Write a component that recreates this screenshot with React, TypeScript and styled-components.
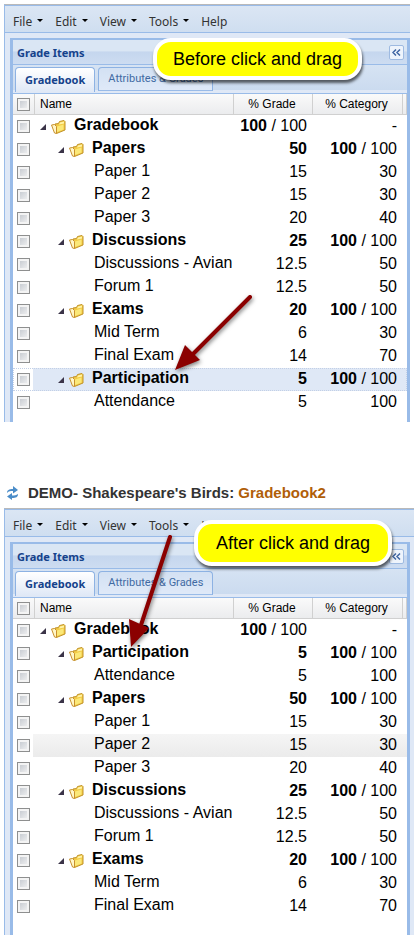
import React from "react";
import styled, { createGlobalStyle, css } from "styled-components";

const Global = createGlobalStyle`
  * { box-sizing: border-box; }
  body { margin: 0; background: #fff; color: #000; font-family: "Liberation Sans", Arial, sans-serif; }
`;

const uiFont = `"Noto Sans", Tahoma, sans-serif`;

const Page = styled.main`
  display: flex;
  flex-direction: column;
  padding: 4px 0 2px 4px;
`;

const Shot = styled.section<{ $inset?: boolean }>`
  position: relative;
  margin-right: ${(p) => (p.$inset ? "4px" : "0")};
  padding: 0 ${(p) => (p.$inset ? "0" : "4px")} 0 5px;
  background: #dfe8f6;
  border-top: 1px solid #b9b9b9;
  border-left: 1px solid #99bbe8;
`;

const MenuBar = styled.nav<{ $inset?: boolean }>`
  display: flex;
  align-items: center;
  gap: 12px;
  height: 28px;
  margin: 0 ${(p) => (p.$inset ? "0" : "-4px")} 5px -5px;
  padding: 6px 8px 0;
  background: linear-gradient(#dbe6f4, #cfdef0);
  border-top: 1px solid #99bbe8;
  border-bottom: 1px solid #99bbe8;
`;

const MenuButton = styled.button<{ $arrow: boolean }>`
  display: flex;
  align-items: center;
  gap: 5px;
  padding: 0;
  border: 0;
  background: none;
  color: #333;
  font: 12px/16px ${uiFont};
  ${(p) =>
    p.$arrow &&
    css`
      &::after {
        content: "";
        margin-top: -4px;
        border: 3px solid transparent;
        border-top-color: #000;
        border-bottom: 0;
      }
    `}
`;

const Panel = styled.div`
  border: solid #99bbe8;
  border-width: 2px 3px 0;
`;

const PanelHeader = styled.header`
  display: flex;
  align-items: center;
  justify-content: space-between;
  height: 25px;
  padding: 0 3px 0 4px;
  background: linear-gradient(#dae6f4 0 45%, #c5d6ee 50%, #cddcf1);
  border-bottom: 1px solid #99bbe8;
`;

const PanelTitle = styled.h2`
  margin: 0;
  padding-top: 2px;
  color: #15428b;
  font: bold 11px/16px ${uiFont};
`;

const CollapseButton = styled.button`
  display: grid;
  place-items: center;
  width: 15px;
  height: 15px;
  padding: 0;
  background: #eef4fc;
  border: 1px solid #9ebae1;
  border-radius: 2px;
`;

const TabBar = styled.div`
  display: flex;
  gap: 3px;
  height: 29px;
  padding: 2px 2px 0;
  background: linear-gradient(#d6e3f3, #cbdbef) top / 100% 25px no-repeat #dfe8f6;
  border-bottom: 1px solid #99bbe8;
`;

const TabFace = styled.button`
  padding: 0 9px;
  border: 1px solid #8db2e3;
  border-bottom: 0;
  border-radius: 4px 4px 0 0;
  white-space: nowrap;
`;

const ActiveTab = styled(TabFace)`
  height: 25px;
  background: linear-gradient(#fff, #dfe8f6);
  color: #15428b;
  font: bold 11px/20px ${uiFont};
`;

const IdleTab = styled(TabFace)`
  height: 24px;
  border-bottom: 1px solid #99bbe8;
  background: linear-gradient(#d3e1f3, #dfe9f8);
  color: #416aa3;
  font: 11px/20px Roboto, Tahoma, sans-serif;
`;

const Grid = styled.table`
  width: 100%;
  table-layout: fixed;
  border-collapse: separate;
  border-spacing: 0;
  background: #fff;
`;

const Col = styled.col<{ $width?: number }>`
  width: ${(p) => (p.$width ? `${p.$width}px` : "auto")};
`;

const HeadCell = styled.th<{ $align?: string }>`
  height: 21px;
  padding: 0 7px 0 5px;
  border-right: 1px solid #d0d0d0;
  border-bottom: 1px solid #d0d0d0;
  background: linear-gradient(#fafafa, #ebecee);
  font: 12px/16px "Liberation Sans", Arial, sans-serif;
  text-align: ${(p) => p.$align ?? "left"};
  white-space: nowrap;
`;

const HeadSpacer = styled(HeadCell)`
  padding: 0;
`;

const Cell = styled.td`
  height: 23px;
  padding: 0;
  overflow: hidden;
  font-size: 16px;
  line-height: 20px;
  white-space: nowrap;
`;

const CheckCell = styled(Cell)``;

const NameCell = styled(Cell)`
  padding-bottom: 3px;
`;

const NumberCell = styled(Cell)<{ $strong: boolean }>`
  padding: 0 6px 1px 0;
  text-align: right;
  font-weight: ${(p) => (p.$strong ? "bold" : "normal")};
`;

const Row = styled.tr<{ $tone?: "selected" | "hover" }>`
  height: 23px;
  ${(p) =>
    p.$tone &&
    css`
      background: ${p.$tone === "selected" ? "#dfe8f6" : "linear-gradient(#f5f5f5, #ebebeb)"};
      ${CheckCell} {
        background: linear-gradient(#fff, #fff) left / 20px 100% no-repeat;
      }
    `}
  ${(p) =>
    p.$tone === "selected" &&
    css`
      outline: 1px dotted #c3d0e6;
      outline-offset: -1px;
    `}
`;

const Light = styled.span`
  font-weight: normal;
`;

const Check = styled.input`
  display: block;
  appearance: none;
  width: 13px;
  height: 13px;
  margin: 0 0 0 4px;
  border: 1px solid #8e8f8f;
  background: linear-gradient(135deg, #bfc4cb, #f6f6f6);
  box-shadow: inset 0 0 0 2px #f4f4f4;
`;

const Node = styled.div<{ $depth: number; $leaf: boolean }>`
  display: flex;
  align-items: center;
  height: 20px;
  padding-left: ${(p) => (p.$leaf ? 59 : 5 + p.$depth * 18)}px;
  font-weight: ${(p) => (p.$leaf ? "normal" : "bold")};
`;

const Expander = styled.button`
  display: flex;
  align-items: center;
  gap: 5px;
  margin-right: 8px;
  padding: 3px 0 0;
  border: 0;
  background: none;
`;

const Callout = styled.p<{ $top: number; $left: number; $roomy?: boolean }>`
  position: absolute;
  top: ${(p) => p.$top}px;
  left: ${(p) => p.$left}px;
  margin: 0;
  padding: ${(p) => (p.$roomy ? "9px 18px" : "7px 16px")};
  border: 4px solid #fff;
  border-radius: 18px;
  background: #ff0;
  box-shadow: 1px 3px 3px rgba(0, 0, 0, 0.6);
  font-size: 18px;
  line-height: 20px;
  white-space: nowrap;
`;

const ArrowLayer = styled.svg<{ $top: number; $left: number }>`
  position: absolute;
  top: ${(p) => p.$top}px;
  left: ${(p) => p.$left}px;
  overflow: visible;
  pointer-events: none;
  filter: drop-shadow(1px 2px 2px rgba(0, 0, 0, 0.5));
`;

const SiteTitle = styled.h1`
  display: flex;
  align-items: center;
  gap: 8px;
  height: 30px;
  margin: 56px 0 0 2px;
  color: #333;
  font-size: 15px;
  line-height: 20px;
  white-space: nowrap;
`;

const SiteLink = styled.a`
  color: #b05e08;
  text-decoration: none;
`;

const GridEnd = styled.div<{ $height: number }>`
  height: ${(p) => p.$height}px;
  background: #fff;
`;

type Item = { name: string; grade: string; category: string; depth?: number };

const gradebook: Item[] = [{ name: "Gradebook", grade: "100 / 100", category: "-", depth: 0 }];
const papers: Item[] = [
  { name: "Papers", grade: "50", category: "100 / 100", depth: 1 },
  { name: "Paper 1", grade: "15", category: "30" },
  { name: "Paper 2", grade: "15", category: "30" },
  { name: "Paper 3", grade: "20", category: "40" },
];
const discussions: Item[] = [
  { name: "Discussions", grade: "25", category: "100 / 100", depth: 1 },
  { name: "Discussions - Avian", grade: "12.5", category: "50" },
  { name: "Forum 1", grade: "12.5", category: "50" },
];
const exams: Item[] = [
  { name: "Exams", grade: "20", category: "100 / 100", depth: 1 },
  { name: "Mid Term", grade: "6", category: "30" },
  { name: "Final Exam", grade: "14", category: "70" },
];
const participation: Item[] = [
  { name: "Participation", grade: "5", category: "100 / 100", depth: 1 },
  { name: "Attendance", grade: "5", category: "100" },
];

const FolderIcon = () => (
  <svg width="15" height="14" viewBox="0 0 15 14" aria-hidden="true">
    <path d="M4 4 7.500 3.500 8.500 1.500 13 .5 14 1.500V10L5.500 13.500z" fill="#f3cb45" stroke="#c0922a" />
    <path d="M.5 5 3.500 4.500 5.500 6.500V13.500L3.500 13z" fill="#fff6c8" stroke="#c8902c" />
    <path d="M6 6.500 12.500 4.500V9.500L6 12z" fill="#fbe878" />
    <path d="M9 2.500 13 1.500V3.500L8 4.500z" fill="#fff3a8" />
  </svg>
);

const Score = ({ value }: { value: string }) => {
  if (value === "-") return <Light>-</Light>;
  const [own, total] = value.split(" / ");
  return (
    <>
      {own}
      {total && <Light> / {total}</Light>}
    </>
  );
};

type GradeItemsProps = { rows: Item[]; marked: string; tone: "selected" | "hover"; inset?: boolean; end: number };

const GradeItems = ({ rows, marked, tone, inset, end }: GradeItemsProps) => (
  <>
    <MenuBar $inset={inset}>
      {["File", "Edit", "View", "Tools", "Help"].map((label) => (
        <MenuButton key={label} $arrow={label !== "Help"}>
          {label}
        </MenuButton>
      ))}
    </MenuBar>
    <Panel>
      <PanelHeader>
        <PanelTitle>Grade Items</PanelTitle>
        <CollapseButton aria-label="Collapse panel">
          <svg width="9" height="7" viewBox="0 0 9 7" fill="none" stroke="#3f66a3" strokeWidth="1.5">
            <path d="M4 .5 1 3.500l3 3M8 .5 5 3.500l3 3" />
          </svg>
        </CollapseButton>
      </PanelHeader>
      <TabBar role="tablist">
        <ActiveTab role="tab" aria-selected="true">
          Gradebook
        </ActiveTab>
        <IdleTab role="tab" aria-selected="false">
          Attributes &amp; Grades
        </IdleTab>
      </TabBar>
      <Grid>
        <colgroup>
          <Col $width={22} />
          <Col />
          <Col $width={79} />
          <Col $width={90} />
          <Col $width={4} />
        </colgroup>
        <thead>
          <tr>
            <HeadSpacer>
              <Check type="checkbox" aria-label="Select all" />
            </HeadSpacer>
            <HeadCell>Name</HeadCell>
            <HeadCell $align="center">% Grade</HeadCell>
            <HeadCell $align="center">% Category</HeadCell>
            <HeadSpacer as="td" />
          </tr>
        </thead>
        <tbody>
          {rows.map((row) => {
            const leaf = row.depth === undefined;
            return (
              <Row key={row.name} $tone={row.name === marked ? tone : undefined}>
                <CheckCell>
                  <Check type="checkbox" aria-label={row.name} />
                </CheckCell>
                <NameCell>
                  <Node $depth={row.depth ?? 2} $leaf={leaf}>
                    {!leaf && (
                      <Expander aria-label={`Collapse ${row.name}`}>
                        <svg width="6" height="6" viewBox="0 0 6 6" aria-hidden="true">
                          <path d="M6 0v6H0z" fill="#3b3448" />
                        </svg>
                        <FolderIcon />
                      </Expander>
                    )}
                    {row.name}
                  </Node>
                </NameCell>
                <NumberCell $strong={!leaf}>
                  <Score value={row.grade} />
                </NumberCell>
                <NumberCell $strong={!leaf}>
                  <Score value={row.category} />
                </NumberCell>
                <Cell />
              </Row>
            );
          })}
        </tbody>
      </Grid>
      <GridEnd $height={end} />
    </Panel>
  </>
);

const App = () => (
  <>
    <Global />
    <Page>
      <Shot $inset>
        <GradeItems
          inset
          rows={[...gradebook, ...papers, ...discussions, ...exams, ...participation]}
          marked="Participation"
          tone="selected"
          end={8}
        />
        <Callout $top={33} $left={148}>
          Before click and drag
        </Callout>
        <ArrowLayer $top={287} $left={170} width="80" height="84" aria-hidden="true">
          <path d="M75 5 18 62" stroke="#8b0000" strokeWidth="4" strokeLinecap="round" />
          <path d="M0 78 10 53 25 68z" fill="#8b0000" />
        </ArrowLayer>
      </Shot>
      <SiteTitle>
        <svg width="14" height="14" viewBox="0 0 14 14" fill="#4a8cc8" aria-hidden="true">
          <path d="M1 7C1 4 3 3 7 3V0l5 4-5 3.500V5C4 5 3 5 1 7z" />
          <path d="M12 8c0 3-2 4-6 4v2L1 10.500 6 7v2.500c3 0 4 0 6-1.500z" />
        </svg>
        <span>
          DEMO- Shakespeare's Birds: <SiteLink href="#gradebook2">Gradebook2</SiteLink>
        </span>
      </SiteTitle>
      <Shot>
        <GradeItems
          rows={[...gradebook, ...participation, ...papers, ...discussions, ...exams]}
          marked="Paper 2"
          tone="hover"
          end={17}
        />
        <Callout $top={11} $left={189} $roomy>
          After click and drag
        </Callout>
        <ArrowLayer $top={26} $left={124} width="44" height="114" aria-hidden="true">
          <path d="M41 2 12 90" stroke="#8b0000" strokeWidth="4" strokeLinecap="round" />
          <path d="M2 112 0 84 20 93z" fill="#8b0000" />
        </ArrowLayer>
      </Shot>
    </Page>
  </>
);

export default App;
